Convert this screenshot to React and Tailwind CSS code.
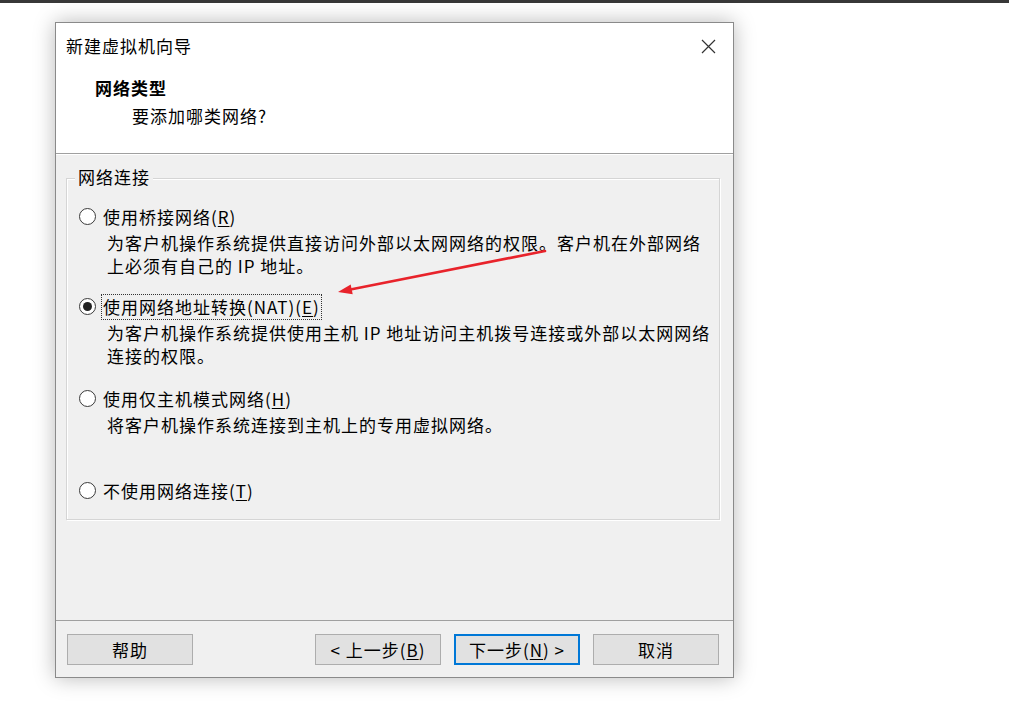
import React from 'react';

const font = { fontFamily: '"Noto Sans CJK SC", "Noto Sans", sans-serif' };

const Key = ({ children }) => <span className="underline underline-offset-2">{children}</span>;

const Radio = ({ checked }) => (
  <span className="w-[17px] h-[17px] rounded-full border border-[#3a3a3a] bg-white flex items-center justify-center shrink-0">
    {checked && <span className="w-[9px] h-[9px] rounded-full bg-[#222]" />}
  </span>
);

const Option = ({ checked, label, lines, focus, gap }) => (
  <div className={gap}>
    <div className="flex items-center h-[23px] ml-[12px]">
      <Radio checked={checked} />
      <span className={`ml-[7px] leading-[22px] ${focus ? 'outline-1 outline-dotted outline-[#333] outline-offset-[1px]' : ''}`}>
        {label}
      </span>
    </div>
    {lines && (
      <div className="ml-[40px] mt-[3px] leading-[23px]">
        {lines.map((l) => (
          <div key={l}>{l}</div>
        ))}
      </div>
    )}
  </div>
);

const Btn = ({ children, primary }) => (
  <button
    className={`w-[126px] h-[31px] bg-[#e1e1e1] text-[17px] tracking-[1px] text-black flex items-center justify-center ${
      primary ? 'border-2 border-[#0078d7]' : 'border border-[#adadad]'
    }`}
  >
    {children}
  </button>
);

export default function App() {
  return (
    <div className="relative w-[1009px] h-[722px] bg-white overflow-hidden text-black" style={font}>
      <div className="h-[3px] bg-[#383838]" />

      <div className="ml-[55px] mt-[19px] w-[679px] h-[656px] border border-[#8a8a8a] bg-[#f0f0f0] flex flex-col shadow-[0_0_20px_rgba(0,0,0,0.28)] text-[17px] tracking-[1px]">
        {/* header */}
        <div className="h-[131px] bg-white border-b border-[#a0a0a0] flex flex-col">
          <div className="flex items-center justify-between h-[22px] mt-[12px] pl-[10px] pr-[17px]">
            <span className="leading-[22px]">新建虚拟机向导</span>
            <svg width="15" height="15" viewBox="0 0 15 15" className="text-[#333]">
              <path d="M1 1L14 14M14 1L1 14" stroke="currentColor" strokeWidth="1.2" />
            </svg>
          </div>
          <div className="ml-[39px] mt-[20px] font-bold leading-[22px]">网络类型</div>
          <div className="ml-[76px] mt-[6px] leading-[22px]">要添加哪类网络?</div>
        </div>

        {/* body */}
        <div className="h-[466px] border-t border-white pt-[23px] pl-[10px] pr-[13px]">
          <div className="relative border border-[#d5d5d5] h-[342px] pt-[26px] shadow-[inset_1px_1px_0_#ffffff,1px_1px_0_#ffffff]">
            <span className="absolute -top-[13px] left-[8px] px-[3px] bg-[#f0f0f0] leading-[22px]">网络连接</span>
            <Option
              label={<>使用桥接网络(<Key>R</Key>)</>}
              lines={['为客户机操作系统提供直接访问外部以太网网络的权限。客户机在外部网络', '上必须有自己的 IP 地址。']}
            />
            <Option
              gap="mt-[18px]"
              checked
              focus
              label={<>使用网络地址转换(NAT)(<Key>E</Key>)</>}
              lines={['为客户机操作系统提供使用主机 IP 地址访问主机拨号连接或外部以太网网络', '连接的权限。']}
            />
            <Option
              gap="mt-[20px]"
              label={<>使用仅主机模式网络(<Key>H</Key>)</>}
              lines={['将客户机操作系统连接到主机上的专用虚拟网络。']}
            />
            <Option gap="mt-[43px]" label={<>不使用网络连接(<Key>T</Key>)</>} />
          </div>
        </div>

        {/* footer */}
        <div className="flex-1 border-t border-[#a0a0a0] flex items-start pt-[13px] pl-[11px] pr-[14px]">
          <Btn>帮助</Btn>
          <div className="flex-1" />
          <div className="flex gap-[13px]">
            <Btn>&lt; 上一步(<Key>B</Key>)</Btn>
            <Btn primary>下一步(<Key>N</Key>) &gt;</Btn>
            <Btn>取消</Btn>
          </div>
        </div>
      </div>

      {/* annotation arrow */}
      <svg className="absolute left-0 top-0 pointer-events-none" width="1009" height="722">
        <line x1="545" y1="251" x2="351.7" y2="289.3" stroke="#e8232b" strokeWidth="2.6" strokeLinecap="round" />
        <polygon points="338,292 350.7,284.4 352.7,294.2" fill="#e8232b" />
      </svg>
    </div>
  );
}
